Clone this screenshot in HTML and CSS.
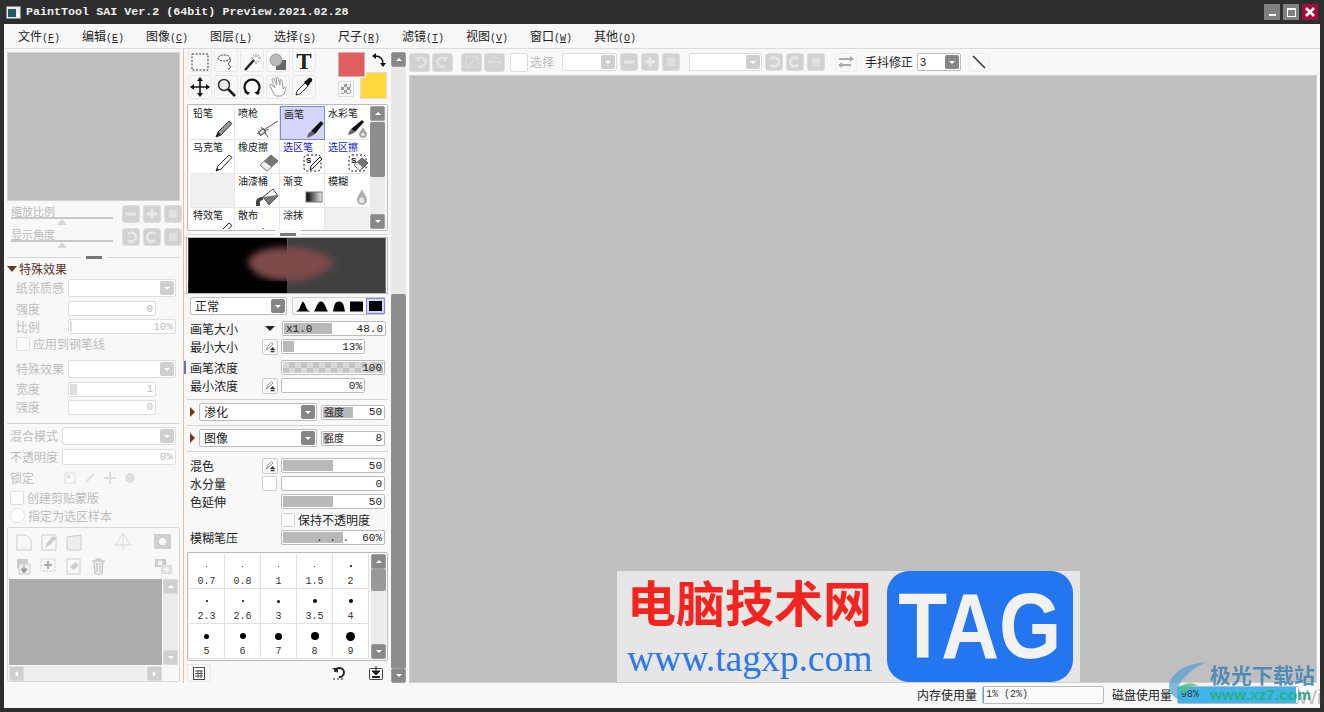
FILE: index.html
```html
<!DOCTYPE html>
<html lang="zh-CN">
<head>
  <meta charset="UTF-8" />
  <title>PaintTool SAI</title>
  <link rel="stylesheet" href="styles.css">
</head>
<body>

<!-- Shared icons -->
<svg class="defs" width="0" height="0">
  <symbol id="i-pencil" viewBox="0 0 24 18"><path d="M6 17l2-5L19 1l3 2.500L11 15z" fill="#999" stroke="#333"/><path d="M6 17l2-5 3 3z" fill="#222"/></symbol>
  <symbol id="i-pen" viewBox="0 0 24 18"><path d="M6 17l2-5L19 1l3 2.500L11 15z" fill="#fff" stroke="#222"/><path d="M6 17l1-3 2 1.500z" fill="#222"/></symbol>
  <symbol id="i-air" viewBox="0 0 24 18"><path d="M2 14L23 1M6 7l7 10M9 11l5-2" fill="none" stroke="#555"/><rect x="4" y="10" width="6" height="4" fill="#ddd" stroke="#444" transform="rotate(-35 7 12)"/></symbol>
  <symbol id="i-brush" viewBox="0 0 24 18"><path d="M11 10L21 0l2.500 2.500L15 13z" fill="#111"/><path d="M11 10l4 3-3 2-5 2 1-4z" fill="#666"/></symbol>
  <symbol id="i-water" viewBox="0 0 24 18"><path d="M6 9L17 0l2 2-9 10z" fill="#111"/><path d="M6 9l4 3-3 2-4 1 1-3z" fill="#666"/><path d="M18 7c2 4 4 5 4 7a4 4 0 0 1-8 0c0-2 2-3 4-7z" fill="#aaa"/><circle cx="18" cy="14.500" r="1.500" fill="#eee"/></symbol>
  <symbol id="i-eraser" viewBox="0 0 24 18"><path d="M5 11L16 1l7 6-11 10z" fill="#777" stroke="#666"/><path d="M5 11l4-4 8 6-5 4z" fill="#eee" stroke="#888"/></symbol>
  <symbol id="i-selpen" viewBox="0 0 24 18"><rect x="4" y="1" width="17" height="16" rx="3" fill="#fff" stroke="#111" stroke-dasharray="2 2"/><path d="M10 16l1-4 9-9 2 2-9 9z" fill="#fff" stroke="#111"/></symbol>
  <symbol id="i-selera" viewBox="0 0 24 18"><rect x="4" y="1" width="17" height="16" rx="3" fill="#fff" stroke="#111" stroke-dasharray="2 2"/><path d="M9 11l8-7 6 5-8 8z" fill="#777" stroke="#555"/><path d="M9 11l3-3 6 5-3 4z" fill="#eee" stroke="#777"/></symbol>
  <symbol id="i-bucket" viewBox="0 0 24 18"><path d="M8 9l10-8 5 7-9 9z" fill="#fff" stroke="#444"/><path d="M8 9l14-2 1 1-9 9z" fill="#777"/><path d="M1 18v-4c0-3 3-5 7-5v3c-2 0-3 1-3 2v4z" fill="#444"/></symbol>
  <symbol id="i-grad" viewBox="0 0 24 18"><defs><linearGradient id="g1"><stop offset="0" stop-color="#000"/><stop offset="1" stop-color="#eee"/></linearGradient></defs><rect x="6" y="4" width="16" height="10" fill="url(#g1)" stroke="#777"/></symbol>
  <symbol id="i-drop" viewBox="0 0 24 18"><path d="M17 1c2 5 5 7 5 11a5 5 0 0 1-10 0c0-4 3-6 5-11z" fill="#b0b0b0"/><path d="M17 9c2 1 3 3 2 5-1 2-5 1-5-1 0-2 1-3 3-4z" fill="#e8e8e8"/></symbol>
  <symbol id="i-pressure" viewBox="0 0 16 16"><path d="M3 12l2-5 5-5 2 2-5 5z" fill="#fff" stroke="#777"/><path d="M8 12h7l-3.500-4z" fill="#333"/><path d="M9 13h5v2H9z" fill="#333"/></symbol>
</svg>

<!-- Title bar -->
<header class="titlebar">
  <svg class="app-icon" width="15" height="15" viewBox="0 0 15 15"><rect x=".5" y="1.500" width="14" height="12" fill="#e8ecec" stroke="#888"/><rect x="2" y="4" width="8" height="8" fill="#1f5c66"/><rect x="11" y="8" width="2" height="3" fill="#fff"/></svg>
  <span class="title-text">PaintTool SAI Ver.2 (64bit) Preview.2021.02.28</span>
  <div class="win-btns">
    <div class="win-btn"><span class="win-min"></span></div>
    <div class="win-btn"><span class="win-max"></span></div>
    <div class="win-btn win-close">
      <svg width="10" height="10" viewBox="0 0 10 10"><path d="M1 1l8 8M9 1l-8 8" stroke="#fff" stroke-width="2.600"/></svg>
    </div>
  </div>
</header>

<div class="window">
  <!-- Menu -->
  <nav class="menubar">
    <span class="menu-item">文件<span class="acc">(<u>F</u>)</span></span>
    <span class="menu-item">编辑<span class="acc">(<u>E</u>)</span></span>
    <span class="menu-item">图像<span class="acc">(<u>C</u>)</span></span>
    <span class="menu-item">图层<span class="acc">(<u>L</u>)</span></span>
    <span class="menu-item">选择<span class="acc">(<u>S</u>)</span></span>
    <span class="menu-item">尺子<span class="acc">(<u>R</u>)</span></span>
    <span class="menu-item">滤镜<span class="acc">(<u>T</u>)</span></span>
    <span class="menu-item">视图<span class="acc">(<u>V</u>)</span></span>
    <span class="menu-item">窗口<span class="acc">(<u>W</u>)</span></span>
    <span class="menu-item">其他<span class="acc">(<u>O</u>)</span></span>
  </nav>

  <div class="workspace">
    <!-- Left panel: navigator, effects, layers -->
    <aside class="left-panel">
      <div class="navigator"></div>

      <div class="nav-row mt4">
        <div class="nav-slider">
          <span class="nav-label">缩放比例</span>
          <span class="nav-track"></span>
          <span class="nav-thumb"></span>
        </div>
        <div class="btn-trio">
          <span class="tbtn"><svg width="12" height="12" viewBox="0 0 12 12"><path d="M1 6h10" stroke="#e8e8e8" stroke-width="3"/></svg></span>
          <span class="tbtn"><svg width="12" height="12" viewBox="0 0 12 12"><path d="M1 6h10M6 1v10" stroke="#e8e8e8" stroke-width="3"/></svg></span>
          <span class="tbtn"><svg width="12" height="12" viewBox="0 0 12 12"><rect x="2" y="2" width="8" height="8" fill="#e0e0e0"/></svg></span>
        </div>
      </div>
      <div class="nav-row mt5">
        <div class="nav-slider">
          <span class="nav-label">显示角度</span>
          <span class="nav-track"></span>
          <span class="nav-thumb"></span>
        </div>
        <div class="btn-trio">
          <span class="tbtn"><svg width="12" height="12" viewBox="0 0 12 12"><path d="M3 3a4.500 4.500 0 1 1 0 6" fill="none" stroke="#e8e8e8" stroke-width="2.500"/></svg></span>
          <span class="tbtn"><svg width="12" height="12" viewBox="0 0 12 12"><path d="M9 3a4.500 4.500 0 1 0 0 6" fill="none" stroke="#e8e8e8" stroke-width="2.500"/></svg></span>
          <span class="tbtn"><svg width="12" height="12" viewBox="0 0 12 12"><rect x="2" y="2" width="8" height="8" fill="#e0e0e0"/></svg></span>
        </div>
      </div>

      <div class="grip-line mt6"><span class="grip"></span></div>

      <div class="fx-head"><span class="tri-down"></span>特殊效果</div>

      <div class="frow h18 mt4 ind"><span class="lbl off">纸张质感</span><div class="combo off w108"><span class="combo-btn"></span></div></div>
      <div class="frow h15 mt4 ind"><span class="lbl off">强度</span><div class="slider off w88"><span class="sl-in" style="--v:0%"><span></span><span>0</span></span></div></div>
      <div class="frow h15 mt3 ind"><span class="lbl off">比例</span><div class="slider off w108"><span class="sl-in" style="--v:2%"><span></span><span>10%</span></span></div></div>
      <div class="frow h14 mt3 ind"><span class="check"></span><span class="off check-lbl">应用到钢笔线</span></div>

      <div class="frow h18 mt9 ind"><span class="lbl off">特殊效果</span><div class="combo off w108"><span class="combo-btn"></span></div></div>
      <div class="frow h14 mt4 ind"><span class="lbl off">宽度</span><div class="slider off w88"><span class="sl-in" style="--v:8%"><span></span><span>1</span></span></div></div>
      <div class="frow h14 mt4 ind"><span class="lbl off">强度</span><div class="slider off w88"><span class="sl-in" style="--v:0%"><span></span><span>0</span></span></div></div>

      <div class="hr mt9"></div>

      <div class="frow h18 mt3 ind-s"><span class="lbl off">混合模式</span><div class="combo off w114"><span class="combo-btn"></span></div></div>
      <div class="frow h16 mt4 ind-s"><span class="lbl off">不透明度</span><div class="slider off w114"><span class="sl-in" style="--v:0%"><span></span><span>0%</span></span></div></div>
      <div class="frow h14 mt6 ind-s">
        <span class="lbl off">锁定</span>
        <div class="lock-icons">
          <svg width="12" height="12" viewBox="0 0 12 12"><rect x="1" y="1" width="10" height="10" fill="none" stroke="#ddd"/><rect x="3" y="3" width="3" height="3" fill="#ddd"/></svg>
          <svg width="12" height="12" viewBox="0 0 12 12"><path d="M2 10L10 2" stroke="#ddd" stroke-width="2"/></svg>
          <svg width="12" height="12" viewBox="0 0 12 12"><path d="M6 0v12M0 6h12" stroke="#ddd" stroke-width="2"/></svg>
          <svg width="12" height="12" viewBox="0 0 12 12"><circle cx="6" cy="6" r="5" fill="#ddd"/></svg>
        </div>
      </div>
      <div class="frow h14 mt6 ind-s"><span class="check"></span><span class="off check-lbl">创建剪贴蒙版</span></div>
      <div class="frow h15 mt3 ind-s"><span class="check radio"></span><span class="off check-lbl">指定为选区样本</span></div>

      <section class="layers mt4">
        <div class="layer-tools">
          <svg width="16" height="17" viewBox="0 0 16 17"><path d="M1 1h9l5 5v10H1z" fill="#f8f8f8" stroke="#ccc"/></svg>
          <svg width="16" height="17" viewBox="0 0 16 17"><path d="M1 1h14v15H1z" fill="#f8f8f8" stroke="#ccc"/><path d="M4 14l2-5 6-7 3 2-6 7z" fill="#ccc"/></svg>
          <svg width="16" height="17" viewBox="0 0 16 17"><path d="M1 3l14-2v15H1z" fill="#eee" stroke="#ccc"/></svg>
          <svg class="lt-fx" width="20" height="20" viewBox="0 0 20 20"><path d="M10 1L3 13h14zM10 1v18M1 13h18" fill="none" stroke="#ddd"/></svg>
          <svg class="lt-mask" width="17" height="15" viewBox="0 0 17 15"><rect width="17" height="15" fill="#cfcfcf"/><circle cx="8.500" cy="7.500" r="3.500" fill="#f6f6f6"/></svg>
        </div>
        <div class="layer-tools lt2">
          <svg width="15" height="17" viewBox="0 0 15 17"><rect x="1" y="1" width="11" height="9" fill="#ccc"/><rect x="3" y="6" width="11" height="10" fill="#eee" stroke="#ccc"/><path d="M8 7v5M5 11h6l-3 4z" fill="#999" stroke="#999"/></svg>
          <svg class="lt-add" width="17" height="15" viewBox="0 0 17 15"><rect x="1" y="1" width="14" height="12" fill="#f8f8f8" stroke="#ccc" stroke-dasharray="2 1"/><path d="M8 3v8M4 7h8" stroke="#aaa" stroke-width="2"/></svg>
          <svg class="lt-era" width="15" height="17" viewBox="0 0 15 17"><rect x="1" y="1" width="13" height="15" fill="#f8f8f8" stroke="#ccc"/><path d="M4 9l5-5 4 3-5 5z" fill="#ccc"/></svg>
          <svg class="lt-del" width="15" height="17" viewBox="0 0 15 17"><path d="M1 3h13M3 3l1 13h7l1-13M6 5v9M9 5v9M5 3V1h5v2" fill="#eee" stroke="#bbb"/></svg>
          <svg class="lt-new" width="19" height="17" viewBox="0 0 19 17"><rect x="1" y="1" width="11" height="8" fill="#ccc"/><circle cx="6" cy="5" r="2.500" fill="#f4f4f4"/><rect x="7" y="7" width="11" height="9" fill="#ddd"/><path d="M12.500 8.500v6M9.500 11.500h6" stroke="#f8f8f8" stroke-width="2"/></svg>
        </div>
        <div class="layer-body">
          <div class="layer-list"></div>
          <div class="vscroll vs-off">
            <span class="sbtn up"></span>
            <span class="sbtn down"></span>
          </div>
        </div>
        <div class="hscroll">
          <span class="sbtn left"></span>
          <span class="sbtn right"></span>
        </div>
      </section>
    </aside>

    <!-- Tools panel -->
    <section class="tool-panel">
      <div class="tool-top">
        <div class="tool-grid">
          <span class="tool t-short"><svg width="18" height="18" viewBox="0 0 18 18"><rect x="1" y="1" width="16" height="16" fill="none" stroke="#333" stroke-dasharray="2 1.500"/></svg></span>
          <span class="tool t-short"><svg width="18" height="18" viewBox="0 0 18 18"><ellipse cx="7" cy="5" rx="6" ry="3" fill="none" stroke="#333" stroke-dasharray="2 1"/><path d="M13 6c2 2-3 4-1 6s2 3-1 4" fill="none" stroke="#333"/></svg></span>
          <span class="tool t-short"><svg width="18" height="18" viewBox="0 0 18 18"><path d="M2 17L11 7" stroke="#222" stroke-width="2.500"/><path d="M13 1v3M13 8v3M8 5h3M15 5h3M10 2l1.500 1.500M16 2l-1.500 1.500M16 9l-1.500-1.500" stroke="#888"/></svg></span>
          <span class="tool t-short"><svg width="18" height="18" viewBox="0 0 18 18"><rect x="7" y="7" width="10" height="10" fill="#666"/><circle cx="7" cy="7" r="6" fill="#bbb" stroke="#999"/></svg></span>
          <span class="tool t-short"><span class="tool-t">T</span></span>
          <span class="tool"><svg width="20" height="20" viewBox="0 0 20 20"><path d="M10 1v18M1 10h18" stroke="#111" stroke-width="1.600"/><path d="M10 0l3 4H7zM10 20l3-4H7zM0 10l4-3v6zM20 10l-4-3v6z" fill="#111"/></svg></span>
          <span class="tool"><svg width="20" height="20" viewBox="0 0 20 20"><circle cx="8" cy="8" r="5.500" fill="#e8eef0" stroke="#333" stroke-width="1.500"/><path d="M12 12l7 7" stroke="#111" stroke-width="2.500"/></svg></span>
          <span class="tool"><svg width="20" height="20" viewBox="0 0 20 20"><path d="M6 16.500A7.500 7.500 0 1 1 14 16.500" fill="none" stroke="#111" stroke-width="2.200"/><path d="M2 15h6l-2 3zM12 15h6l-2 3z" fill="#111"/></svg></span>
          <span class="tool"><svg width="20" height="20" viewBox="0 0 20 20"><path d="M6 17L2 9c-1-2 1-2 2-1l3 3-3-8c0-2 2-2 2-1l3 6-1-7c0-1 2-1 2 0l2 7V3c1-1 2 0 2 1l1 8c2-3 3-2 3-1l-2 6-3 2H8z" fill="#fff" stroke="#999"/></svg></span>
          <span class="tool"><svg width="20" height="20" viewBox="0 0 20 20"><path d="M2 18l1-4 8-8 3 3-8 8z" fill="#fff" stroke="#333"/><path d="M10 5l5-4c2-1 4 1 3 3l-4 5z" fill="#111"/></svg></span>
        </div>
        <div class="color-box">
          <span class="swatch-back"></span>
          <span class="swatch-front"></span>
          <svg class="swap" width="14" height="14" viewBox="0 0 14 14"><path d="M3 3c5 0 8 3 8 8" fill="none" stroke="#111" stroke-width="1.500"/><path d="M0 3l4-3v6zM11 14l-3-4h6z" fill="#111"/></svg>
          <span class="reset"><span class="checker"></span></span>
        </div>
      </div>

      <!-- Brushes -->
      <div class="brush-box">
        <div class="brush-grid">
          <div class="bcell"><span>铅笔</span><svg width="24" height="18"><use href="#i-pencil"/></svg></div>
          <div class="bcell"><span>喷枪</span><svg width="24" height="18"><use href="#i-air"/></svg></div>
          <div class="bcell sel"><span>画笔</span><svg width="24" height="18"><use href="#i-brush"/></svg></div>
          <div class="bcell"><span>水彩笔</span><svg width="24" height="18"><use href="#i-water"/></svg></div>
          <div class="bcell"><span>马克笔</span><svg width="24" height="18"><use href="#i-pen"/></svg></div>
          <div class="bcell"><span>橡皮擦</span><svg width="24" height="18"><use href="#i-eraser"/></svg></div>
          <div class="bcell blue"><span>选区笔</span><svg width="24" height="18"><use href="#i-selpen"/><text x="6" y="9" class="svg-s">S</text></svg></div>
          <div class="bcell blue"><span>选区擦</span><svg width="24" height="18"><use href="#i-selera"/><text x="6" y="9" class="svg-s">S</text></svg></div>
          <div class="bcell empty"></div>
          <div class="bcell"><span>油漆桶</span><svg width="24" height="18"><use href="#i-bucket"/></svg></div>
          <div class="bcell"><span>渐变</span><svg width="24" height="18"><use href="#i-grad"/></svg></div>
          <div class="bcell"><span>模糊</span><svg width="24" height="18"><use href="#i-drop"/></svg></div>
          <div class="bcell"><span>特效笔</span><svg width="24" height="18"><use href="#i-pen"/></svg></div>
          <div class="bcell"><span>散布</span><svg width="24" height="18"><path d="M8 6l3 3-3 3-3-3z M14 9h7v5h-7z" fill="#111"/></svg></div>
          <div class="bcell"><span>涂抹</span><svg width="24" height="18"><path d="M3 18l10-9c3-2 7 1 4 4l-9 8" fill="#fff" stroke="#444"/></svg></div>
          <div class="bcell empty"></div>
        </div>
        <div class="vscroll">
          <span class="sbtn up"></span>
          <span class="sthumb st-brush"></span>
          <span class="sbtn down"></span>
        </div>
      </div>

      <div class="grip-line grip-tool"><span class="grip"></span></div>

      <!-- Stroke preview -->
      <svg class="stroke-preview" width="200" height="55" viewBox="0 0 201 56">
        <defs>
          <filter id="soft" x="-30%" y="-60%" width="160%" height="220%"><feGaussianBlur stdDeviation="4"/></filter>
          <clipPath id="cut-left"><rect width="101" height="56"/></clipPath>
        </defs>
        <rect width="101" height="56" fill="#000"/>
        <rect x="101" width="100" height="56" fill="#404040"/>
        <g filter="url(#soft)"><path d="M60 24c8-14 30-16 46-14 18 0 32 4 44 16-8 8-26 18-44 18-20 0-38-2-46-20z" fill="#7e4848"/></g>
        <rect y="44" width="101" height="12" fill="#000" clip-path="url(#cut-left)"/>
      </svg>

      <div class="frow h18 mt4 tool-mode">
        <div class="combo w97"><span class="combo-txt">正常</span><span class="combo-btn dark"></span></div>
        <div class="shape-box">
          <svg width="14" height="11" viewBox="0 0 14 10"><path d="M0 10C4 9 5 1 7 0c2 1 3 9 7 10z" fill="#000"/></svg>
          <svg width="14" height="11" viewBox="0 0 14 10"><path d="M0 10C2 8 3 0 7 0s5 8 7 10z" fill="#000"/></svg>
          <svg width="14" height="11" viewBox="0 0 14 10"><path d="M1 10C2 6 2 0 7 0s5 6 6 10z" fill="#000"/></svg>
          <svg width="13" height="11" viewBox="0 0 13 10"><rect width="13" height="10" fill="#000"/></svg>
          <span class="shape-sel"></span>
        </div>
      </div>

      <div class="frow h15 mt6 trow">
        <span class="tlbl">画笔大小</span><span class="tri-small"></span>
        <div class="slider w104"><span class="sl-in mono" style="--v:48%"><span>x1.0</span><span>48.0</span></span></div>
      </div>
      <div class="frow h15 mt3 trow">
        <span class="tlbl">最小大小</span><svg class="pbtn" width="16" height="16"><use href="#i-pressure"/></svg>
        <div class="slider w84"><span class="sl-in" style="--v:14%"><span></span><span>13%</span></span></div>
      </div>
      <div class="frow h15 mt6 trow">
        <span class="tick"></span>
        <span class="tlbl">画笔浓度</span><span class="pgap"></span>
        <div class="slider w104 slider-chk"><span class="sl-in"><span></span><span>100</span></span></div>
      </div>
      <div class="frow h15 mt3 trow">
        <span class="tlbl">最小浓度</span><svg class="pbtn" width="16" height="16"><use href="#i-pressure"/></svg>
        <div class="slider w84"><span class="sl-in" style="--v:0%"><span></span><span>0%</span></span></div>
      </div>

      <div class="hr hr-t mt6"></div>
      <div class="frow h18 mt3 drow">
        <span class="tri-right"></span>
        <div class="combo w118"><span class="combo-txt">渗化</span><span class="combo-btn dark"></span></div>
        <div class="slider w64"><span class="sl-in" style="--v:50%"><span class="small">强度</span><span>50</span></span></div>
      </div>
      <div class="hr hr-t mt4"></div>
      <div class="frow h18 mt3 drow">
        <span class="tri-right"></span>
        <div class="combo w118"><span class="combo-txt">图像</span><span class="combo-btn dark"></span></div>
        <div class="slider w64"><span class="sl-in" style="--v:10%"><span class="small">强度</span><span>8</span></span></div>
      </div>
      <div class="hr hr-t mt4"></div>

      <div class="frow h15 mt6 trow">
        <span class="tlbl">混色</span><svg class="pbtn" width="16" height="16"><use href="#i-pressure"/></svg>
        <div class="slider w104"><span class="sl-in" style="--v:50%"><span></span><span>50</span></span></div>
      </div>
      <div class="frow h15 mt3 trow">
        <span class="tlbl">水分量</span><span class="check pbtn-check"></span>
        <div class="slider w104"><span class="sl-in" style="--v:0%"><span></span><span>0</span></span></div>
      </div>
      <div class="frow h15 mt3 trow">
        <span class="tlbl">色延伸</span><span class="pgap"></span>
        <div class="slider w104"><span class="sl-in" style="--v:50%"><span></span><span>50</span></span></div>
      </div>
      <div class="frow h15 mt3 trow">
        <span class="tlbl"></span><span class="pgap"></span>
        <span class="check"></span><span class="keep-lbl">保持不透明度</span>
      </div>
      <div class="frow h15 mt3 trow">
        <span class="tlbl">模糊笔压</span><span class="pgap"></span>
        <div class="slider w104"><span class="sl-in" style="--v:60%"><span></span><span>. . .&nbsp; 60%</span></span></div>
      </div>

      <!-- Brush sizes -->
      <div class="size-box mt7">
        <div class="size-grid">
          <div class="scell"><i style="width:1px;height:1px"></i><span>0.7</span></div>
          <div class="scell"><i style="width:1px;height:1px"></i><span>0.8</span></div>
          <div class="scell"><i style="width:1px;height:1px"></i><span>1</span></div>
          <div class="scell"><i style="width:1px;height:1px"></i><span>1.5</span></div>
          <div class="scell"><i style="width:2px;height:2px"></i><span>2</span></div>
          <div class="scell"><i style="width:2px;height:2px"></i><span>2.3</span></div>
          <div class="scell"><i style="width:2px;height:2px"></i><span>2.6</span></div>
          <div class="scell"><i style="width:3px;height:3px"></i><span>3</span></div>
          <div class="scell"><i style="width:4px;height:4px"></i><span>3.5</span></div>
          <div class="scell"><i style="width:4px;height:4px"></i><span>4</span></div>
          <div class="scell"><i style="width:5px;height:5px"></i><span>5</span></div>
          <div class="scell"><i style="width:6px;height:6px"></i><span>6</span></div>
          <div class="scell"><i style="width:7px;height:7px"></i><span>7</span></div>
          <div class="scell"><i style="width:8px;height:8px"></i><span>8</span></div>
          <div class="scell"><i style="width:9px;height:9px"></i><span>9</span></div>
        </div>
        <div class="vscroll">
          <span class="sbtn up"></span>
          <span class="sthumb st-size"></span>
          <span class="sbtn down"></span>
        </div>
      </div>

      <div class="tool-foot">
        <span class="foot-btn"><svg width="12" height="14" viewBox="0 0 12 14"><rect x=".5" y="1.500" width="11" height="12" fill="#fff" stroke="#444"/><path d="M0 1.500h12M2 5h8M2 7.500h8M2 10h8M5 4v8M8 4v8" stroke="#555"/></svg></span>
        <svg class="foot-undo" width="14" height="14" viewBox="0 0 14 14"><path d="M3 6a4.500 4.500 0 1 1 4 5" fill="none" stroke="#222" stroke-width="2"/><path d="M0 2h6v5z" fill="#222"/><path d="M1 13h2M5 13h2M9 13h2" stroke="#222"/></svg>
        <svg class="foot-save" width="14" height="14" viewBox="0 0 14 14"><rect x=".5" y="2.500" width="13" height="11" rx="1" fill="#fff" stroke="#444"/><path d="M7 0v6M3 5h8l-4 4z" fill="#222" stroke="#222"/><path d="M3 11h8" stroke="#222" stroke-width="2"/></svg>
      </div>
    </section>

    <!-- Tall scrollbar between tools and canvas -->
    <div class="panel-scroll">
      <span class="sbtn up"></span>
      <span class="ps-track"><span class="ps-thumb"></span></span>
      <span class="sbtn down"></span>
    </div>

    <!-- Canvas side -->
    <main class="canvas-side">
      <div class="toolbar">
        <span class="tbtn tb"><svg width="14" height="12" viewBox="0 0 14 12"><path d="M4 3a5 4.500 0 1 1 1 7" fill="none" stroke="#e4e4e4" stroke-width="2.500"/><path d="M1 1h5v5z" fill="#e4e4e4"/></svg></span>
        <span class="tbtn tb"><svg width="14" height="12" viewBox="0 0 14 12"><path d="M10 3a5 4.500 0 1 0-1 7" fill="none" stroke="#e4e4e4" stroke-width="2.500"/><path d="M13 1H8v5z" fill="#e4e4e4"/></svg></span>
        <span class="tbtn tb ml6"><svg width="14" height="12" viewBox="0 0 14 12"><rect x="1" y="1" width="12" height="10" fill="none" stroke="#e4e4e4" stroke-dasharray="2 1"/><path d="M3 10L11 2" stroke="#e4e4e4"/></svg></span>
        <span class="tbtn tb"><svg width="14" height="12" viewBox="0 0 14 12"><ellipse cx="7" cy="6" rx="6" ry="5" fill="none" stroke="#e4e4e4" stroke-dasharray="2 1"/><path d="M1 6h12" stroke="#e4e4e4"/></svg></span>
        <span class="check check-big ml3"></span>
        <span class="off sel-lbl">选择</span>
        <div class="combo off w55"><span class="combo-btn"></span></div>
        <span class="tbtn ts"><svg width="12" height="12" viewBox="0 0 12 12"><path d="M1 6h10" stroke="#e8e8e8" stroke-width="3"/></svg></span>
        <span class="tbtn ts"><svg width="12" height="12" viewBox="0 0 12 12"><path d="M1 6h10M6 1v10" stroke="#e8e8e8" stroke-width="3"/></svg></span>
        <span class="tbtn ts"><svg width="12" height="12" viewBox="0 0 12 12"><rect x="2" y="2" width="8" height="8" fill="#e0e0e0"/></svg></span>
        <div class="combo off w73 ml7"><span class="combo-btn"></span></div>
        <span class="tbtn ts"><svg width="12" height="12" viewBox="0 0 12 12"><path d="M3 3a4.500 4.500 0 1 1 0 6" fill="none" stroke="#e8e8e8" stroke-width="2.500"/></svg></span>
        <span class="tbtn ts"><svg width="12" height="12" viewBox="0 0 12 12"><path d="M9 3a4.500 4.500 0 1 0 0 6" fill="none" stroke="#e8e8e8" stroke-width="2.500"/></svg></span>
        <span class="tbtn ts"><svg width="12" height="12" viewBox="0 0 12 12"><rect x="2" y="2" width="8" height="8" fill="#e0e0e0"/></svg></span>
        <span class="plain-btn ml8"><svg width="16" height="14" viewBox="0 0 16 14"><path d="M1 4h12M1 10h12" stroke="#aaa" stroke-width="2"/><path d="M16 4l-4-3v6zM0 10l4-3v6z" fill="#aaa"/></svg></span>
        <span class="stab-lbl">手抖修正</span>
        <div class="combo w44"><span class="combo-txt num">3</span><span class="combo-btn dark"></span></div>
        <span class="plain-btn pb-line ml6"><svg width="14" height="14" viewBox="0 0 14 14"><path d="M1 1l12 12" stroke="#222" stroke-width="1.200"/></svg></span>
      </div>

      <div class="canvas">
        <!-- Site watermark pasted over the shot -->
        <div class="wm-tag">
          <div class="wm-left">
            <span class="wm-cn">电脑技术网</span>
            <span class="wm-url">www.tagxp.com</span>
          </div>
          <div class="wm-logo"><span class="wm-logo-txt">TAG</span></div>
        </div>
      </div>
    </main>
  </div>

  <!-- Status bar -->
  <footer class="statusbar">
    <span>内存使用量</span>
    <div class="meter m-mem"><span class="meter-txt">1% (2%)</span></div>
    <span class="ml3">磁盘使用量</span>
    <div class="meter m-disk"><span class="meter-txt">98%</span></div>
  </footer>
</div>

<div class="wm-xz">
  <svg class="wm-swoosh" width="44" height="46" viewBox="0 0 44 46"><path d="M40 2C18 4 4 14 3 26c0 8 6 14 18 16C10 36 10 26 18 18 24 11 32 6 40 2z" fill="#4f9fd0" fill-opacity=".7"/><path d="M12 28c6-6 16-6 20-2-6-1-10 1-12 6-2 3-6 1-8-4z" fill="#4cc08a" fill-opacity=".8"/></svg>
  <div class="wm-xz-text">
    <span class="wm-xz-cn">极光下载站</span>
    <span class="wm-xz-url">www.xz7.com</span>
  </div>
</div>
<span class="wm-ghost">Wi</span>

</body>
</html>
```

FILE: styles.css
```css
* {
  box-sizing: border-box;
}

html, body {
  height: 100%;
}

body {
  margin: 0;
  background: #2e2e2e;
  font-family: "Noto Sans CJK SC", "Liberation Sans", sans-serif;
  font-size: 12px;
  line-height: 14px;
  color: #222;
  overflow: hidden;
  position: relative;
}

.defs {
  position: absolute;
}

.svg-s {
  font: bold 8px "Liberation Sans", sans-serif;
  fill: #111;
}

/* title bar */
.titlebar {
  height: 24px;
  display: flex;
  align-items: center;
  padding: 0 6px 0 6px;
  background: #2e2e2e;
}

.app-icon {
  margin-right: 5px;
}

.title-text {
  font: bold 11.7px "Liberation Mono", monospace;
  color: #f0f0f0;
}

.win-btns {
  margin-left: auto;
  display: flex;
  gap: 3px;
}

.win-btn {
  width: 16px;
  height: 16px;
  background: #808080;
  display: flex;
  align-items: center;
  justify-content: center;
}

.win-close {
  background: #a80a3c;
}

.win-min {
  width: 7px;
  height: 2px;
  background: #fff;
  margin-top: 6px;
}

.win-max {
  width: 9px;
  height: 9px;
  border: 1px solid #fff;
  border-top-width: 2px;
}

/* window */
.window {
  height: 684px;
  margin: 0 4px;
  background: #f8f8f8;
  display: flex;
  flex-direction: column;
}

.menubar {
  height: 25px;
  display: flex;
  align-items: center;
  padding-left: 14px;
  border-bottom: 1px solid #dcdcdc;
}

.menu-item {
  width: 64px;
  flex: none;
}

.acc {
  font: 10px "Liberation Mono", monospace;
}

.workspace {
  height: 634px;
  display: flex;
}

/* left panel */
.left-panel {
  width: 180px;
  flex: none;
  padding: 3px 0 0 3px;
  border-right: 1px solid #e3bfa6;
  color: #bbb;
}

.navigator {
  width: 173px;
  height: 149px;
  background: #bdbdbd;
  border: 1px solid #d2d2d2;
}

.nav-row {
  height: 18px;
  display: flex;
  justify-content: space-between;
  padding: 0 1px 0 4px;
}

.nav-slider {
  width: 102px;
  position: relative;
}

.nav-label {
  font-size: 11px;
  line-height: 12px;
  display: block;
}

.nav-track {
  display: block;
  height: 2px;
  background: #c8c8c8;
}

.nav-thumb {
  position: absolute;
  left: 46px;
  top: 14px;
  width: 0;
  height: 0;
  border-left: 5px solid transparent;
  border-right: 5px solid transparent;
  border-bottom: 6px solid #d8d8d8;
}

.btn-trio {
  display: flex;
  gap: 3px;
}

.tbtn {
  width: 18px;
  height: 18px;
  background: #d2d2d2;
  border: 1px solid #dedede;
  border-radius: 3px;
  display: flex;
  align-items: center;
  justify-content: center;
  flex: none;
}

.grip-line {
  height: 10px;
  display: flex;
  align-items: center;
  justify-content: center;
  background: linear-gradient(#d8d8d8, #d8d8d8) center / 100% 1px no-repeat;
  width: 173px;
}

.grip {
  width: 26px;
  height: 10px;
  background: linear-gradient(#777, #777) center / 16px 3px no-repeat #f8f8f8;
}

.fx-head {
  display: flex;
  align-items: center;
  color: #5a3018;
  height: 13px;
}

.tri-down {
  width: 0;
  height: 0;
  border-left: 5px solid transparent;
  border-right: 5px solid transparent;
  border-top: 6px solid #6b3a1c;
  margin-right: 2px;
}

.frow {
  display: flex;
  align-items: center;
}

.ind {
  padding-left: 9px;
}

.ind-s {
  padding-left: 3px;
}

.lbl {
  width: 52px;
  flex: none;
}

.off {
  color: #bdbdbd;
}

.check-lbl {
  margin-left: 3px;
}

.h14 { height: 14px; }
.h15 { height: 15px; }
.h16 { height: 16px; }
.h18 { height: 18px; }

.mt3 { margin-top: 3px; }
.mt4 { margin-top: 4px; }
.mt5 { margin-top: 5px; }
.mt6 { margin-top: 6px; }
.mt7 { margin-top: 7px; }
.mt9 { margin-top: 9px; }

.ml3 { margin-left: 3px; }
.ml6 { margin-left: 6px; }
.ml7 { margin-left: 7px; }
.ml8 { margin-left: 8px; }

.w44 { width: 44px; }
.w55 { width: 55px; }
.w64 { width: 64px; }
.w73 { width: 73px; }
.w84 { width: 84px; }
.w88 { width: 88px; }
.w97 { width: 97px; }
.w104 { width: 104px; }
.w108 { width: 108px; }
.w114 { width: 114px; }
.w118 { width: 118px; }

.combo {
  height: 18px;
  background: #fff;
  border: 1px solid #bbb;
  border-radius: 2px;
  display: flex;
  align-items: center;
  justify-content: space-between;
  padding-right: 1px;
  flex: none;
}

.combo.off {
  border-color: #ddd;
}

.combo-txt {
  padding-left: 4px;
}

.num {
  font: 11px "Liberation Sans", sans-serif;
  padding-left: 2px;
}

.combo-btn {
  width: 14px;
  height: 14px;
  margin-left: auto;
  background: #cfcfcf;
  border-radius: 2px;
  display: flex;
  align-items: center;
  justify-content: center;
}

.combo-btn::after {
  content: "";
  border-left: 3px solid transparent;
  border-right: 3px solid transparent;
  border-top: 3px solid #fff;
}

.combo-btn.dark {
  background: #868686;
}

.slider {
  height: 15px;
  background: #fff;
  border: 1px solid #bbb;
  border-radius: 2px;
  padding: 1px;
  flex: none;
  display: flex;
}

.frow.h16 .slider {
  height: 16px;
}

.slider.off {
  border-color: #ddd;
  color: #bbb;
}

.sl-in {
  flex: 1;
  display: flex;
  justify-content: space-between;
  align-items: center;
  padding: 0 1px;
  font-size: 11px;
  font-family: "Liberation Mono", monospace;
  background: linear-gradient(to right, #b9b9b9 var(--v, 0%), transparent var(--v, 0%));
}

.slider.off .sl-in {
  background: linear-gradient(to right, #dedede var(--v, 0%), transparent var(--v, 0%));
}

.mono {
  padding-left: 2px;
}

.small {
  font-family: "Noto Sans CJK SC", sans-serif;
  font-size: 10px;
}

.slider-chk .sl-in {
  background: repeating-conic-gradient(#c4c4c4 0% 25%, #d8d8d8 0% 50%) 0 0 / 12px 12px;
}

.check {
  width: 14px;
  height: 14px;
  background: #fff;
  border: 1px solid #ccc;
  border-radius: 2px;
  flex: none;
}

.left-panel .check {
  border-color: #ddd;
}

.radio {
  border-radius: 50%;
  width: 15px;
  height: 15px;
}

.lock-icons {
  display: flex;
  gap: 8px;
  padding-left: 2px;
}

.hr {
  height: 1px;
  background: #d4d4d4;
  width: 173px;
}

/* layers */
.layers {
  width: 173px;
  height: 155px;
  border: 1px solid #d8d8d8;
  border-radius: 2px;
  padding: 0 1px;
}

.layer-tools {
  height: 24px;
  padding: 6px 0 0 7px;
  display: flex;
  gap: 9px;
}

.lt-fx {
  margin-left: 22px;
  margin-top: -2px;
}

.lt-mask {
  margin-left: 12px;
}

.lt2 {
  height: 27px;
  gap: 0;
}

.lt-add {
  margin-left: 9px;
}

.lt-era {
  margin-left: 9px;
}

.lt-del {
  margin-left: 10px;
}

.lt-new {
  margin-left: 48px;
}

.layer-body {
  display: flex;
  height: 86px;
}

.layer-list {
  width: 153px;
  background: #adadad;
}

.vscroll {
  width: 15px;
  margin-left: 1px;
  background: #ebebeb;
  display: flex;
  flex-direction: column;
  justify-content: space-between;
  flex: none;
}

.vs-off .sbtn {
  background: #cfcfcf;
  border-color: #dcdcdc;
}

.hscroll {
  height: 15px;
  width: 153px;
  margin-top: 1px;
  background: #efefef;
  display: flex;
  justify-content: space-between;
}

.hscroll .sbtn {
  background: #cfcfcf;
  border-color: #dcdcdc;
}

.sbtn {
  width: 15px;
  height: 15px;
  background: #888;
  border: 1px solid #a0a0a0;
  border-radius: 2px;
  display: flex;
  align-items: center;
  justify-content: center;
  flex: none;
}

.sbtn::after {
  content: "";
  width: 0;
  height: 0;
}

.up::after {
  border-left: 3px solid transparent;
  border-right: 3px solid transparent;
  border-bottom: 3px solid #fff;
}

.down::after {
  border-left: 3px solid transparent;
  border-right: 3px solid transparent;
  border-top: 3px solid #fff;
}

.left::after {
  border-top: 3px solid transparent;
  border-bottom: 3px solid transparent;
  border-right: 3px solid #fff;
}

.right::after {
  border-top: 3px solid transparent;
  border-bottom: 3px solid transparent;
  border-left: 3px solid #fff;
}

/* tool panel */
.tool-panel {
  width: 207px;
  flex: none;
  padding-left: 3px;
}

.tool-top {
  height: 55px;
  display: flex;
  padding-left: 1px;
}

.tool-grid {
  display: grid;
  grid-template-columns: repeat(5, 24px);
  grid-template-rows: 23px 24px;
  column-gap: 2px;
  row-gap: 3px;
  height: 50px;
}

.tool {
  border: 1px solid #e8e8e8;
  border-radius: 3px;
  display: flex;
  align-items: center;
  justify-content: center;
}

.t-short {
  border-top: 0;
  padding-top: 3px;
}

.tool-t {
  font: bold 23px/1 "Liberation Serif", serif;
  color: #222;
}

.color-box {
  width: 49px;
  height: 50px;
  margin: 3px 0 0 22px;
  position: relative;
}

.swatch-back {
  position: absolute;
  left: 22px;
  top: 20px;
  width: 27px;
  height: 27px;
  background: #ffd93d;
  border: 1px solid #ddd;
}

.swatch-front {
  position: absolute;
  left: 0;
  top: 0;
  width: 27px;
  height: 25px;
  background: #e06060;
  border: 1px solid #d0b0b0;
  outline: 1px solid #f8f8f8;
}

.swap {
  position: absolute;
  left: 34px;
  top: 1px;
}

.reset {
  position: absolute;
  left: 0;
  top: 29px;
  width: 16px;
  height: 16px;
  border: 1px solid #ddd;
  display: flex;
  align-items: center;
  justify-content: center;
}

.checker {
  width: 10px;
  height: 10px;
  background: repeating-conic-gradient(#999 0% 25%, #eee 0% 50%) 0 0 / 6px 6px;
}

.brush-box {
  width: 201px;
  height: 127px;
  border: 1px solid #bbb;
  border-radius: 2px;
  padding: 1px 2px;
  display: flex;
  overflow: hidden;
}

.brush-grid {
  width: 181px;
  display: grid;
  grid-template-columns: repeat(4, 45px);
  grid-auto-rows: 34px;
  overflow: hidden;
  background: #fff;
}

.bcell {
  background: #fff;
  border: 1px solid #e6e6e6;
  border-width: 0 1px 1px 0;
  padding: 1px 0 0 3px;
  display: flex;
  flex-direction: column;
  font-size: 10px;
  line-height: 12px;
  height: 34px;
}

.bcell svg {
  align-self: flex-end;
  margin-top: 1px;
  flex: none;
}

.bcell.sel {
  background: #d4d6fb;
  border: 1px solid #8286dc;
}

.bcell.blue {
  color: #1818c8;
}

.bcell.empty {
  background: #f0f0f0;
}

.st-brush {
  height: 55px;
  margin-top: 1px;
}

.sthumb {
  display: block;
  width: 15px;
  background: #8e8e8e;
  border-radius: 2px;
  margin-bottom: auto;
}

.st-size {
  height: 22px;
  background: #999;
}

.grip-tool {
  width: 201px;
  height: 7px;
}

.stroke-preview {
  display: block;
  outline: 1px solid #bbb;
}

.tool-mode {
  padding-left: 3px;
  gap: 5px;
}

.shape-box {
  width: 93px;
  height: 18px;
  border: 1px solid #ccc;
  display: flex;
  align-items: center;
  gap: 4px;
  padding-left: 3px;
  border-radius: 2px;
}

.shape-sel {
  width: 17px;
  height: 14px;
  background: #000;
  border: 2px solid #d4d6fb;
  outline: 1px solid #8286dc;
}

.trow {
  padding-left: 3px;
  position: relative;
}

.tlbl {
  width: 72px;
  flex: none;
}

.tri-small {
  width: 0;
  height: 0;
  margin: 0 7px 0 3px;
  border-left: 5px solid transparent;
  border-right: 5px solid transparent;
  border-top: 5px solid #222;
  flex: none;
}

.pbtn {
  width: 16px;
  height: 16px;
  margin-right: 3px;
  border: 1px solid #ccc;
  border-radius: 2px;
  flex: none;
  padding: 1px;
}

.pbtn-check {
  margin-right: 4px;
  width: 15px;
  height: 15px;
}

.pgap {
  width: 19px;
  flex: none;
}

.tick {
  position: absolute;
  left: -3px;
  top: 1px;
  width: 2px;
  height: 13px;
  background: #6a6ae0;
}

.keep-lbl {
  margin-left: 3px;
}

.hr-t {
  width: 201px;
}

.drow {
  padding-left: 3px;
  gap: 4px;
}

.tri-right {
  width: 0;
  height: 0;
  border-top: 5px solid transparent;
  border-bottom: 5px solid transparent;
  border-left: 5px solid #6b3a1c;
}

.size-box {
  width: 201px;
  height: 109px;
  border: 1px solid #bbb;
  border-radius: 2px;
  padding: 1px;
  display: flex;
}

.size-grid {
  width: 182px;
  display: grid;
  grid-template-columns: repeat(5, 36px);
  grid-auto-rows: 35px;
}

.scell {
  background: #fff;
  border: 1px solid #e0e0e0;
  border-width: 0 1px 1px 0;
  display: flex;
  flex-direction: column;
  align-items: center;
  padding-top: 2px;
  font: 10px/11px "Liberation Mono", monospace;
  color: #333;
}

.scell i {
  display: block;
  background: #000;
  border-radius: 50%;
  margin: auto 0;
}

.scell span {
  height: 12px;
}

.size-box .vscroll {
  margin-left: 0;
}

.tool-foot {
  display: flex;
  align-items: center;
  height: 20px;
  padding-top: 3px;
}

.foot-btn {
  width: 24px;
  height: 18px;
  border: 1px solid #e8e8e8;
  border-radius: 2px;
  display: flex;
  align-items: center;
  justify-content: center;
}

.foot-undo {
  margin-left: 121px;
}

.foot-save {
  margin-left: 23px;
}

/* the tall scrollbar */
.panel-scroll {
  width: 15px;
  flex: none;
  padding-top: 3px;
  display: flex;
  flex-direction: column;
}

.ps-track {
  height: 601px;
  background: #e8e8e8;
  display: flex;
  align-items: flex-end;
}

.ps-thumb {
  display: block;
  width: 15px;
  height: 374px;
  background: #8e8e8e;
  border-radius: 2px 2px 0 0;
}

/* canvas */
.canvas-side {
  flex: 1;
  min-width: 0;
  padding: 0 3px;
  display: flex;
  flex-direction: column;
}

.toolbar {
  height: 26px;
  display: flex;
  align-items: center;
  gap: 2px;
  flex: none;
}

.tb {
  width: 21px;
  height: 19px;
}

.ts {
  width: 18px;
  height: 18px;
  margin-left: 1px;
}

.check-big {
  width: 18px;
  height: 19px;
  border-color: #ddd;
}

.sel-lbl {
  margin-right: 6px;
  width: 24px;
  white-space: nowrap;
}

.plain-btn {
  width: 22px;
  height: 19px;
  border: 1px solid #eee;
  border-radius: 3px;
  display: flex;
  align-items: center;
  justify-content: center;
  flex: none;
}

.pb-line {
  width: 20px;
}

.stab-lbl {
  margin-left: 6px;
  width: 50px;
  white-space: nowrap;
}

.canvas {
  flex: 1;
  background: #bfbfbf;
  border: 1px solid #d0d0d0;
  position: relative;
}

/* watermarks */
.wm-tag {
  position: absolute;
  left: 207px;
  bottom: 0;
  width: 463px;
  height: 111px;
  background: #e6e6e6;
  display: flex;
}

.wm-left {
  width: 270px;
  display: flex;
  flex-direction: column;
  padding-left: 10px;
}

.wm-cn {
  font: bold 49px/48px "Noto Sans CJK SC", sans-serif;
  color: #f5241f;
  margin-top: 6px;
  white-space: nowrap;
}

.wm-url {
  font: 37.5px/40px "Liberation Serif", serif;
  color: #2b78e8;
  margin-top: 14px;
  white-space: nowrap;
}

.wm-logo {
  width: 186px;
  height: 111px;
  border-radius: 22px;
  background: #2475f0;
  color: #f2f2f2;
  display: flex;
  align-items: center;
  justify-content: center;
}

.wm-logo-txt {
  font: bold 92px/100px "Liberation Sans", sans-serif;
  transform: scaleX(.87);
  margin-bottom: 2px;
}

.wm-xz {
  position: absolute;
  left: 1166px;
  top: 660px;
  display: flex;
  align-items: flex-start;
}

.wm-xz-text {
  display: flex;
  flex-direction: column;
  margin-top: 3px;
}

.wm-xz-cn {
  font: bold 21px/22px "Noto Sans CJK SC", sans-serif;
  color: #3d83b4;
  opacity: .85;
}

.wm-xz-url {
  font: bold 15.5px/18px "Liberation Sans", sans-serif;
  color: #27b08a;
  margin-top: 1px;
}

.wm-ghost {
  position: absolute;
  left: 1298px;
  top: 686px;
  font: 20px/22px "Liberation Sans", sans-serif;
  color: rgba(120, 120, 120, .45);
}

/* status bar */
.statusbar {
  height: 25px;
  display: flex;
  align-items: center;
  justify-content: flex-end;
  padding: 0 21px 2px 0;
  gap: 5px;
}

.meter {
  width: 122px;
  height: 18px;
  border: 1px solid #bbb;
  border-radius: 2px;
  background: #fafafa;
  display: flex;
  align-items: center;
  padding-left: 3px;
}

.m-mem {
  background: linear-gradient(to right, #3fb6ea 1%, #fafafa 1%);
}

.m-disk {
  background: linear-gradient(to right, #3fb6ea 98%, #fafafa 98%);
}

.meter-txt {
  font: 10px "Liberation Mono", monospace;
  color: #333;
}
```
